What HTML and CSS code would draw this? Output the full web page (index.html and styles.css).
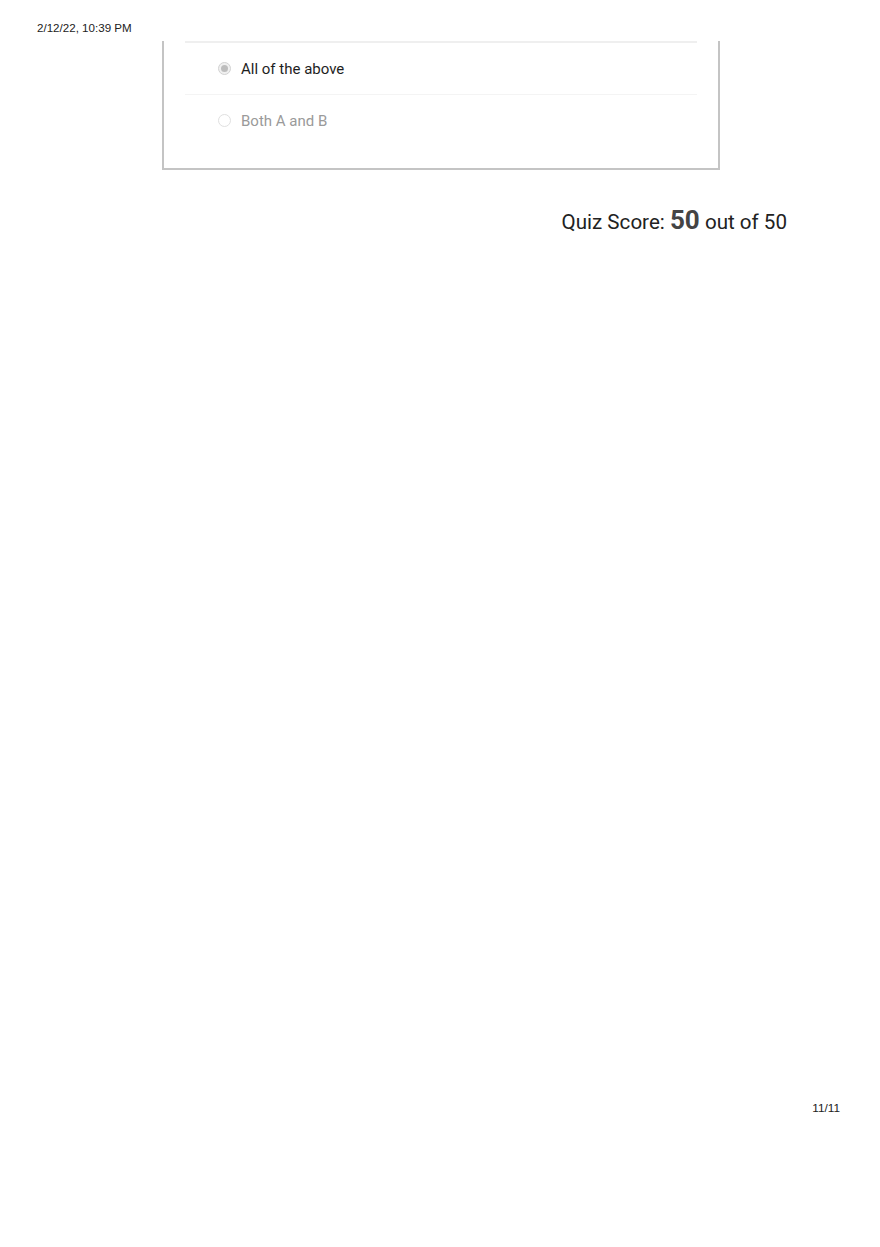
FILE: index.html
```html
<!DOCTYPE html>
<html>
<head>
<meta charset="utf-8">
<link rel="stylesheet" href="styles.css">
</head>
<body>
<div class="page">
  <header class="print-header">2/12/22, 10:39 PM</header>
  <section class="card">
    <div class="answers">
      <div class="answer selected">
        <span class="radio checked"></span>
        <span class="label">All of the above</span>
      </div>
      <div class="answer">
        <span class="radio"></span>
        <span class="label">Both A and B</span>
      </div>
    </div>
  </section>
  <div class="score">Quiz Score: <strong>50</strong> out of 50</div>
  <div class="spacer"></div>
  <footer class="print-footer">11/11</footer>
</div>
</body>
</html>
```
FILE: styles.css
```css
html, body {
  margin: 0;
  padding: 0;
  background: #ffffff;
}
.page {
  width: 880px;
  height: 1247px;
  display: flex;
  flex-direction: column;
  font-family: "Liberation Sans", Arial, sans-serif;
}
.print-header {
  font-size: 11.6px;
  line-height: 14px;
  color: #222;
  padding: 21px 0 0 37px;
  height: 20px;
}
.card {
  box-sizing: border-box;
  margin-left: 162px;
  width: 558px;
  border-style: solid;
  border-color: #c4c4c4;
  border-width: 0 2px 2px 2px;
  padding: 0 21px;
  height: 129px;
}
.answers {
  border-top: 2px solid #efefef;
}
.answer {
  display: flex;
  align-items: center;
  height: 51px;
  padding-left: 33px;
  font-family: Roboto, "Liberation Sans", sans-serif;
  font-size: 15px;
  color: #9a9a9a;
}
.answer.selected {
  color: #1e1e1e;
  border-bottom: 1px solid #f4f4f4;
}
.radio {
  width: 11px;
  height: 11px;
  border-radius: 50%;
  border: 1px solid #e0e0e0;
  margin-right: 10px;
  box-sizing: content-box;
  flex: none;
  display: flex;
  align-items: center;
  justify-content: center;
}
.radio.checked {
  border-color: #d2d2d2;
  background: #f0f0f0;
}
.radio.checked::after {
  content: "";
  width: 7px;
  height: 7px;
  border-radius: 50%;
  background: #bdbdbd;
}
.score {
  font-family: Roboto, "Liberation Sans", sans-serif;
  font-size: 20.6px;
  color: #222;
  text-align: right;
  padding-right: 93px;
  margin-top: 35px;
  line-height: 30px;
}
.score strong {
  font-size: 26px;
  font-weight: 700;
  color: #444;
}
.spacer {
  flex: 1;
}
.print-footer {
  font-size: 11.8px;
  line-height: 14px;
  color: #222;
  text-align: right;
  padding: 0 40px 0 0;
  margin-bottom: 132px;
}
```
